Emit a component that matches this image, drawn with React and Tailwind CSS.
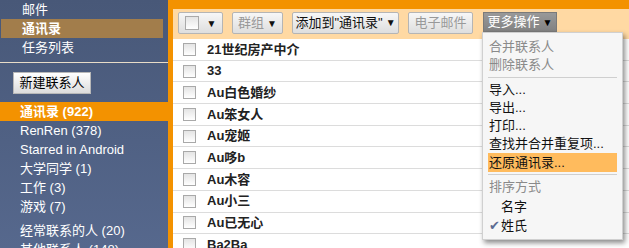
import React from 'react';

const FONT = "font-['Liberation_Sans','Noto_Sans_CJK_SC',sans-serif]";

const GROUPS = ['RenRen (378)', 'Starred in Android', '大学同学 (1)', '工作 (3)', '游戏 (7)'];

const CONTACTS = [
  '21世纪房产中介',
  '33',
  'Au白色婚纱',
  'Au笨女人',
  'Au宠姬',
  'Au哆b',
  'Au木容',
  'Au小三',
  'Au已无心',
  'Ba2Ba',
];

function Checkbox({ size = 'w-[13px] h-[13px]' }) {
  return (
    <span className={`${size} inline-block border border-[#a9a9a9] bg-gradient-to-b from-[#e4e4e4] to-white`} />
  );
}

function ToolButton({ children, disabled, className = '' }) {
  return (
    <div
      className={`h-[22px] flex items-center justify-center border border-[#b5b5b5] rounded-[2px] bg-gradient-to-b from-[#f7f7f7] to-[#dedede] text-[13px] ${
        disabled ? 'text-[#999]' : 'text-[#111]'
      } ${className}`}
    >
      {children}
    </div>
  );
}

function Caret() {
  return <span className="text-[10px] ml-[3px] leading-none">▼</span>;
}

function Sidebar() {
  return (
    <div className="w-[168px] shrink-0 h-full bg-gradient-to-b from-[#485878] to-[#56688d] text-white text-[13px]">
      <div className="h-[19px] flex items-center pl-[22px]">邮件</div>
      <div className="h-[19px] ml-[1px] mr-[5px] flex items-center pl-[21px] bg-[#a27d4b] font-bold">通讯录</div>
      <div className="h-[19px] flex items-center pl-[22px]">任务列表</div>
      <div className="mt-[5px] h-px bg-[#e8dcc8]" />
      <div className="pt-[9px] pl-[13px]">
        <div className="w-[78px] h-[22px] flex items-center justify-center border border-[#b8b8b8] bg-gradient-to-b from-white to-[#dcdcdc] text-black">
          新建联系人
        </div>
      </div>
      <div className="mt-[8px] h-[19px] flex items-center pl-[20px] bg-[#f39200] font-bold">通讯录 (922)</div>
      {GROUPS.map((g) => (
        <div key={g} className="h-[19px] flex items-center pl-[20px]">
          {g}
        </div>
      ))}
      <div className="mt-[5px] h-[19px] flex items-center pl-[20px]">经常联系的人 (20)</div>
      <div className="h-[19px] flex items-center pl-[20px]">其他联系人 (148)</div>
    </div>
  );
}

function MoreMenu() {
  const item = 'h-[18px] flex items-center pl-[6px]';
  return (
    <div className="absolute left-[-1px] top-[20px] w-[141px] h-[208px] bg-[#f6f6f6] border border-[#d0d0d0] shadow-[2px_3px_5px_rgba(0,0,0,0.45)] text-[13px] pt-[5px] z-10">
      <div className={`${item} text-[#8a8a8a]`}>合并联系人</div>
      <div className={`${item} text-[#8a8a8a]`}>删除联系人</div>
      <div className="my-[3px] mx-[5px] h-px bg-[#cfcfcf]" />
      <div className={`${item} text-[#111]`}>导入...</div>
      <div className={`${item} text-[#111]`}>导出...</div>
      <div className={`${item} text-[#111]`}>打印...</div>
      <div className={`${item} text-[#111]`}>查找并合并重复项...</div>
      <div className="mx-[5px] h-[19px] flex items-center pl-[1px] bg-[#ffbb5d] text-[#111]">还原通讯录...</div>
      <div className="mt-[2px] mb-[2px] mx-[5px] h-px bg-[#cfcfcf]" />
      <div className={`${item} text-[#8a8a8a] h-[20px]`}>排序方式</div>
      <div className={`${item} pl-[18px] h-[19px] text-[#111]`}>名字</div>
      <div className={`${item} h-[20px] text-[#111]`}>
        <span className="w-[12px] text-[#5b6b92] text-[13px]">✔</span>
        <span>姓氏</span>
      </div>
    </div>
  );
}

function Toolbar() {
  return (
    <div className="h-[30px] bg-[#ffd9a3] flex items-start pt-[3px] pl-[5px] gap-[9px]">
      <ToolButton className="w-[45px] gap-[8px]">
        <Checkbox size="w-[14px] h-[14px]" />
        <span className="text-[10px]">▼</span>
      </ToolButton>
      <ToolButton disabled className="w-[51px]">
        群组
        <span className="text-[#111]">
          <Caret />
        </span>
      </ToolButton>
      <ToolButton className="w-[107px]">
        添加到"通讯录"
        <Caret />
      </ToolButton>
      <ToolButton disabled className="w-[65px]">
        电子邮件
      </ToolButton>
      <div className="relative ml-[1px]">
        <div className="w-[74px] h-[20px] flex items-center justify-center bg-gradient-to-b from-[#999] to-[#828282] text-white text-[13px] border border-[#7a7a7a]">
          更多操作
          <span className="text-black">
            <Caret />
          </span>
        </div>
        <MoreMenu />
      </div>
    </div>
  );
}

export default function App() {
  return (
    <div className={`${FONT} w-[629px] h-[248px] flex overflow-hidden`}>
      <Sidebar />
      <div className="flex-1 h-full bg-[#f39200] pt-[9px] pl-[5px]">
        <div className="h-full bg-white">
          <Toolbar />
          {CONTACTS.map((name) => (
            <div
              key={name}
              className="h-[21.7px] box-border border-b border-[#dcdcdc] flex items-center pl-[10px] gap-[11px]"
            >
              <Checkbox />
              <span className="text-[13px] font-bold text-[#222]">{name}</span>
            </div>
          ))}
        </div>
      </div>
    </div>
  );
}
